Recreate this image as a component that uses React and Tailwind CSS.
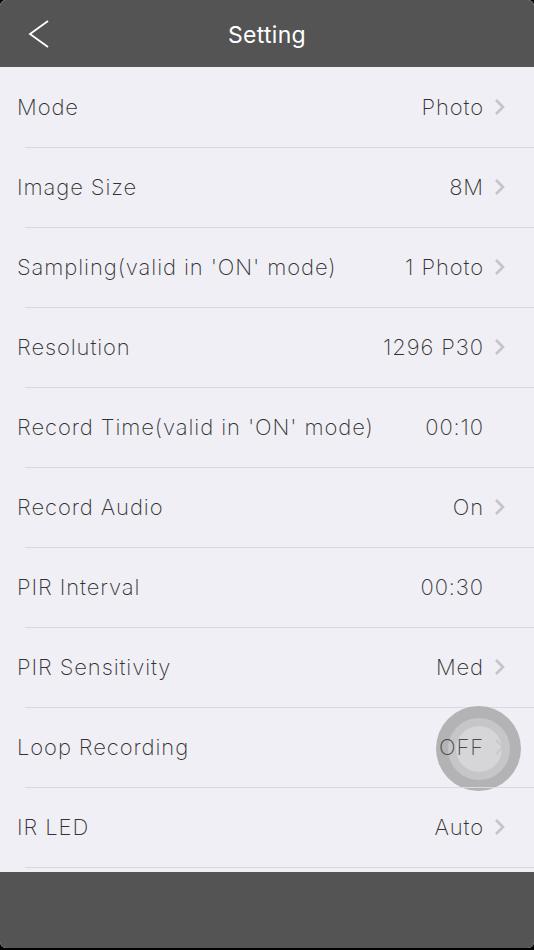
const rows = [
  { label: 'Mode', value: 'Photo', arrow: true },
  { label: 'Image Size', value: '8M', arrow: true },
  { label: "Sampling(valid in 'ON' mode)", value: '1 Photo', arrow: true },
  { label: 'Resolution', value: '1296 P30', arrow: true },
  { label: "Record Time(valid in 'ON' mode)", value: '00:10', arrow: false },
  { label: 'Record Audio', value: 'On', arrow: true },
  { label: 'PIR Interval', value: '00:30', arrow: false },
  { label: 'PIR Sensitivity', value: 'Med', arrow: true },
  { label: 'Loop Recording', value: 'OFF', arrow: true, touch: true },
  { label: 'IR LED', value: 'Auto', arrow: true },
];

function Chevron() {
  return (
    <svg width="14" height="18" viewBox="0 0 14 18" className="shrink-0">
      <path d="M3 2 L10 9 L3 16" fill="none" stroke="#c4c4c9" strokeWidth="2.6" />
    </svg>
  );
}

function Row({ row }) {
  return (
    <div className="relative h-[80px] flex items-center pl-[17px] pr-[27px]">
      {row.touch && (
        <div className="absolute left-[436px] top-[-1px] w-[85px] h-[85px] rounded-full bg-[#b3b3b5] flex items-center justify-center">
          <div className="w-[62px] h-[62px] rounded-full bg-[#c6c6c8] flex items-center justify-center">
            <div className="w-[46px] h-[46px] rounded-full bg-[#d6d6d8]" />
          </div>
        </div>
      )}
      <span className="relative flex-1 text-[22px] text-[#333333] font-extralight tracking-[0.9px]">{row.label}</span>
      <span className={`relative text-[22px] font-extralight tracking-[0.9px] ${row.touch ? 'text-[#4a4a4a]' : 'text-[#333333]'}`}>{row.value}</span>
      <span className={`relative w-[23px] flex justify-end ${row.touch ? 'opacity-60' : ''}`}>{row.arrow && <Chevron />}</span>
      <div className="absolute left-[25px] right-0 bottom-[-1px] h-px bg-[#d9d8de]" />
    </div>
  );
}

export default function App() {
  return (
    <div className="w-[534px] h-[950px] bg-black" style={{ fontFamily: 'Inter, "Noto Sans", sans-serif' }}>
      <div className="w-full h-[948px] bg-[#f0eff5] rounded-[6px] overflow-hidden flex flex-col">
        <div className="h-[67px] bg-[#545454] flex items-center relative">
          <svg width="24" height="32" viewBox="0 0 24 32" className="absolute left-[27px] top-[19px]">
            <path d="M21 2 L3 15 L21 28" fill="none" stroke="#ffffff" strokeWidth="1.8" />
          </svg>
          <div className="flex-1 text-center text-white text-[23px] font-normal tracking-[0.3px] pt-[3px]">Setting</div>
        </div>
        <div className="flex flex-col">
          {rows.map((r) => (
            <Row key={r.label} row={r} />
          ))}
        </div>
        <div className="h-[5px]" />
        <div className="flex-1 bg-[#545454]" />
      </div>
    </div>
  );
}
